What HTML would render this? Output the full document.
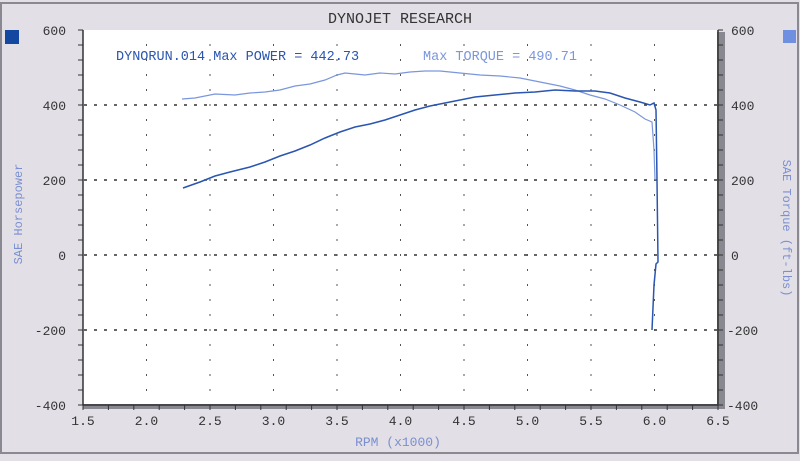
<!DOCTYPE html>
<html><head><style>
body{margin:0;width:800px;height:456px;overflow:hidden;background:#e2dfe6;}
</style></head><body>
<svg width="800" height="456" xmlns="http://www.w3.org/2000/svg" font-family="Liberation Mono, monospace">
<rect x="0" y="0" width="800" height="456" fill="#e2dfe6"/>
<rect x="1" y="3" width="797" height="450" fill="none" stroke="#8a8890" stroke-width="2"/>
<rect x="5" y="30" width="14" height="14" fill="#1448a0"/>
<rect x="783" y="30" width="13" height="13" fill="#6f8fe0"/>
<text x="400" y="23" font-size="15" fill="#333" text-anchor="middle">DYNOJET RESEARCH</text>
<rect x="83" y="32" width="642" height="377" fill="#888890"/>
<rect x="83" y="30" width="634" height="374" fill="#fff"/>
<g stroke="#333" stroke-width="1.5" stroke-dasharray="3,7">
<line x1="84" y1="105" x2="717" y2="105"/><line x1="84" y1="180" x2="717" y2="180"/>
<line x1="84" y1="255" x2="717" y2="255"/><line x1="84" y1="330" x2="717" y2="330"/>
</g>
<g stroke="#555" stroke-width="1" stroke-dasharray="2,13">
<line x1="146.5" y1="44" x2="146.5" y2="404"/><line x1="210" y1="44" x2="210" y2="404"/>
<line x1="273.5" y1="44" x2="273.5" y2="404"/><line x1="337" y1="44" x2="337" y2="404"/>
<line x1="400.5" y1="44" x2="400.5" y2="404"/><line x1="464" y1="44" x2="464" y2="404"/>
<line x1="527.5" y1="44" x2="527.5" y2="404"/><line x1="591" y1="44" x2="591" y2="404"/>
<line x1="654.5" y1="44" x2="654.5" y2="404"/>
</g>
<line x1="83" y1="30" x2="83" y2="405" stroke="#333" stroke-width="1.5"/>
<line x1="83" y1="405" x2="718" y2="405" stroke="#333" stroke-width="1.5"/>
<line x1="718" y1="30" x2="718" y2="405" stroke="#333" stroke-width="1.5"/>
<g stroke="#333" stroke-width="1">
<path d="M78 30h5M78 45h5M78 60h5M78 75h5M78 90h5M78 105h5M78 120h5M78 135h5M78 150h5M78 165h5M78 180h5M78 195h5M78 210h5M78 225h5M78 240h5M78 255h5M78 270h5M78 285h5M78 300h5M78 315h5M78 330h5M78 345h5M78 360h5M78 375h5M78 390h5M78 405h5"/>
<path d="M718 30h5M718 45h5M718 60h5M718 75h5M718 90h5M718 105h5M718 120h5M718 135h5M718 150h5M718 165h5M718 180h5M718 195h5M718 210h5M718 225h5M718 240h5M718 255h5M718 270h5M718 285h5M718 300h5M718 315h5M718 330h5M718 345h5M718 360h5M718 375h5M718 390h5M718 405h5"/>
<path d="M83 405v5M108.4 405v5M133.8 405v5M159.2 405v5M184.6 405v5M210 405v5M235.4 405v5M260.8 405v5M286.2 405v5M311.6 405v5M337 405v5M362.4 405v5M387.8 405v5M413.2 405v5M438.6 405v5M464 405v5M489.4 405v5M514.8 405v5M540.2 405v5M565.6 405v5M591 405v5M616.4 405v5M641.8 405v5M667.2 405v5M692.6 405v5M718 405v5"/>
</g>
<g font-size="13" fill="#333">
<text x="66" y="35" text-anchor="end">600</text><text x="66" y="110" text-anchor="end">400</text>
<text x="66" y="185" text-anchor="end">200</text><text x="66" y="260" text-anchor="end">0</text>
<text x="66" y="335" text-anchor="end">-200</text><text x="66" y="410" text-anchor="end">-400</text>
<text x="731" y="35">600</text><text x="731" y="110">400</text><text x="731" y="185">200</text>
<text x="731" y="260">0</text><text x="727" y="335">-200</text><text x="727" y="410">-400</text>
<g text-anchor="middle">
<text x="83" y="425">1.5</text><text x="146.5" y="425">2.0</text><text x="210" y="425">2.5</text>
<text x="273.5" y="425">3.0</text><text x="337" y="425">3.5</text><text x="400.5" y="425">4.0</text>
<text x="464" y="425">4.5</text><text x="527.5" y="425">5.0</text><text x="591" y="425">5.5</text>
<text x="654.5" y="425">6.0</text><text x="718" y="425">6.5</text></g>
</g>
<text x="398" y="446" font-size="13" fill="#7a8fd0" text-anchor="middle">RPM (x1000)</text>
<text transform="translate(22,214) rotate(-90)" font-size="12" fill="#7a8fd0" text-anchor="middle">SAE Horsepower</text>
<text transform="translate(783,228) rotate(90)" font-size="12" fill="#7a8fd0" text-anchor="middle">SAE Torque (ft-lbs)</text>
<text x="116" y="60" font-size="13.5" fill="#2a55b0">DYNORUN.014 Max POWER = 442.73</text>
<text x="423" y="60" font-size="13.5" fill="#7a96dd">Max TORQUE = 490.71</text>
<path d="M182 99L195 98L215 94L235 95L250 93L265 92L280 90L295 86L310 84L325 80L337 75L345 73L355 74L365 75L380 73L395 74L410 72L425 71L440 71L460 73L480 75L500 76L520 78L540 82L560 86L575 90L590 95L605 99L620 105L635 112L645 119L652 122L654 150L655 180" fill="none" stroke="#7a96dd" stroke-width="1.2"/>
<path d="M183 188L200 182L215 176L230 172L250 167L265 162L280 156L295 151L310 145L325 138L340 132L355 127L370 124L385 120L400 115L415 110L430 106L445 103L460 100L475 97L495 95L515 93L535 92L555 90L575 91L595 91L610 93L625 98L640 102L650 105L654 103L656 110L657 180L658 262L656 264L654 285L652 330" fill="none" stroke="#2a55b0" stroke-width="1.5"/>
</svg>
</body></html>
